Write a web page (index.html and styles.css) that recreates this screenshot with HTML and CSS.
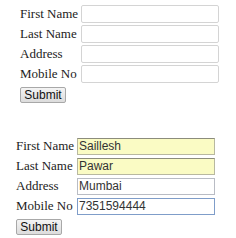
FILE: index.html
```html
<!DOCTYPE html>
<html lang="en">
<head>
<meta charset="UTF-8">
<meta name="viewport" content="width=device-width, initial-scale=1.0">
<title>Registration</title>
<link rel="stylesheet" href="styles.css">
</head>
<body>
<form class="reg-form empty-form">
<div class="form-row">
<label for="fname1">First Name</label>
<input type="text" id="fname1" class="form-field">
</div>
<div class="form-row">
<label for="lname1">Last Name</label>
<input type="text" id="lname1" class="form-field">
</div>
<div class="form-row">
<label for="addr1">Address</label>
<input type="text" id="addr1" class="form-field">
</div>
<div class="form-row">
<label for="mob1">Mobile No</label>
<input type="text" id="mob1" class="form-field">
</div>
<div class="button-wrap">
<button type="button">Submit</button>
</div>
</form>

<form class="reg-form filled-form">
<div class="form-row">
<label for="fname2">First Name</label>
<input type="text" id="fname2" class="form-field autofill" value="Saillesh">
</div>
<div class="form-row">
<label for="lname2">Last Name</label>
<input type="text" id="lname2" class="form-field autofill" value="Pawar">
</div>
<div class="form-row">
<label for="addr2">Address</label>
<input type="text" id="addr2" class="form-field plain" value="Mumbai">
</div>
<div class="form-row">
<label for="mob2">Mobile No</label>
<input type="text" id="mob2" class="form-field focused" value="7351594444">
</div>
<div class="button-wrap">
<button type="button">Submit</button>
</div>
</form>
</body>
</html>
```

FILE: styles.css
```css
body {
    margin: 0;
    background-color: #fff;
    font: 13px/1.2 "Liberation Serif", "Times New Roman", serif;
    color: #222;
}

.reg-form {
    display: flex;
    flex-direction: column;
    gap: 2px;
}

.empty-form {
    padding: 5px 0 0 20px;
}

.filled-form {
    padding: 34px 0 0 16px;
}

.form-row {
    display: flex;
    align-items: center;
    height: 18px;
}

label {
    width: 61px;
    flex-shrink: 0;
    white-space: nowrap;
}

.form-field {
    box-sizing: border-box;
    width: 138px;
    height: 18px;
    margin: 0;
    padding: 0 1px;
    font: 12px "Liberation Sans", Arial, sans-serif;
    color: #333;
    border: 1px solid #d4d4d4;
    border-radius: 2px;
    background: #fff;
}

.filled-form .form-field {
    height: 17px;
    border-radius: 0;
}

.autofill {
    background: #fafbc4;
    border-color: #b8b8a0;
    border-top-color: #8c8c7c;
}

.plain {
    border-color: #b9bcc4;
}

.focused {
    border-color: #7f9dc9;
}

.button-wrap {
    margin-top: 2px;
}

button {
    box-sizing: border-box;
    width: 46px;
    height: 16px;
    padding: 0;
    font: 12px/14px "Liberation Sans", Arial, sans-serif;
    color: #111;
    border: 1px solid #a8a8a8;
    border-radius: 2px;
    background: linear-gradient(#f4f4f4, #dcdcdc);
    cursor: pointer;
}
```
